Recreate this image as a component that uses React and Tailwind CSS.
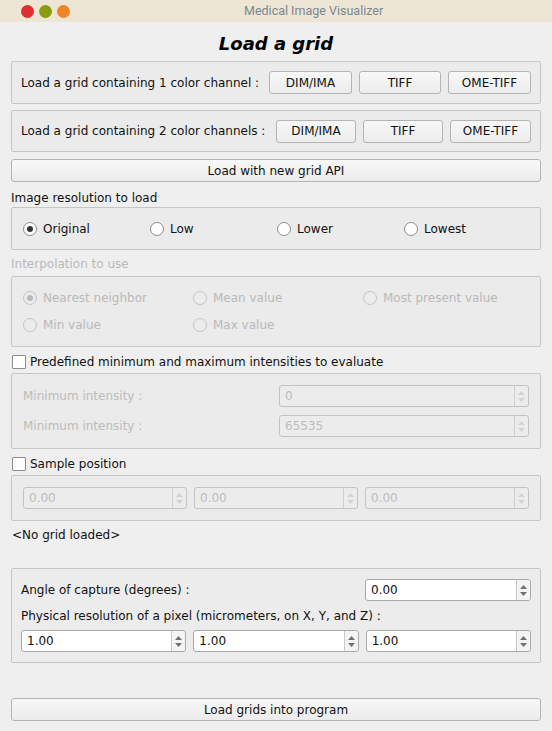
import React from 'react';

const FONT = { fontFamily: '"DejaVu Sans", Verdana, sans-serif' };

const Btn = ({ children, className = '' }) => (
  <div className={`h-[23px] flex items-center justify-center rounded-[3px] border border-[#b4b4b4] bg-gradient-to-b from-[#f8f8f8] to-[#ececec] text-[12px] text-[#111] ${className}`}>
    {children}
  </div>
);

const Radio = ({ label, checked, disabled }) => (
  <div className="flex items-center gap-[6px]">
    <div className={`w-[14px] h-[14px] rounded-full border flex items-center justify-center ${disabled ? 'border-[#c4c4c4] bg-[#ececec]' : 'border-[#8c8c8c] bg-white'}`}>
      {checked && <div className={`w-[6px] h-[6px] rounded-full ${disabled ? 'bg-[#b8b8b8]' : 'bg-[#333]'}`} />}
    </div>
    <span className={disabled ? 'text-[#b9b9b9]' : 'text-[#111]'}>{label}</span>
  </div>
);

const Check = ({ label }) => (
  <div className="h-[26px] pt-[4px] flex items-center gap-[4px] pl-[1px]">
    <div className="w-[14px] h-[14px] border border-[#8c8c8c] bg-white rounded-[1px]" />
    <span className="text-[#111]">{label}</span>
  </div>
);

const Spin = ({ value, disabled, className = '' }) => (
  <div className={`h-[22px] flex rounded-[3px] border ${disabled ? 'border-[#c2c2c2] bg-[#ececec]' : 'border-[#a8a8a8] bg-white'} ${className}`}>
    <div className={`flex-1 flex items-center pl-[5px] ${disabled ? 'text-[#bcbcbc]' : 'text-[#111]'}`}>{value}</div>
    <div className={`w-[14px] border-l flex flex-col items-center justify-center gap-[3px] ${disabled ? 'border-[#cfcfcf]' : 'border-[#c8c8c8] bg-[#f4f4f4] rounded-r-[3px]'}`}>
      <svg width="7" height="4" viewBox="0 0 7 4"><path d="M0 4 L3.5 0 L7 4 Z" fill={disabled ? '#d2d2d2' : '#707070'} /></svg>
      <svg width="7" height="4" viewBox="0 0 7 4"><path d="M0 0 L3.5 4 L7 0 Z" fill={disabled ? '#d2d2d2' : '#707070'} /></svg>
    </div>
  </div>
);

const Group = ({ className = '', children }) => (
  <div className={`border border-[#c6c6c6] rounded-[2px] bg-[#ebebeb] ${className}`}>{children}</div>
);

export default function App() {
  return (
    <div className="w-[552px] h-[731px] bg-[#efefef] text-[12px] overflow-hidden" style={FONT}>
      {/* title bar */}
      <div className="h-[22px] bg-[#ede6d5] flex items-center relative">
        <div className="flex gap-[5px] pl-[21px]">
          <div className="w-[13px] h-[13px] rounded-full bg-[#de3030]" />
          <div className="w-[13px] h-[13px] rounded-full bg-[#8a9c0c]" />
          <div className="w-[13px] h-[13px] rounded-full bg-[#ef8526]" />
        </div>
        <div className="absolute left-[244px] top-0 h-[22px] flex items-center text-[12.5px] text-[#7b8792]" style={{ fontFamily: 'Roboto, "Noto Sans", sans-serif' }}>
          Medical Image Visualizer
        </div>
      </div>

      <div className="h-[39px] pt-[4px] flex items-center justify-center text-[18px] font-bold italic text-black">
        Load a grid
      </div>

      <div className="px-[11px]">
        <Group className="h-[43px] flex items-center pl-[9px] pr-[9px]">
          <span className="flex-1 text-[#111]">Load a grid containing 1 color channel :</span>
          <div className="flex gap-[7px]">
            <Btn className="w-[83px]">DIM/IMA</Btn>
            <Btn className="w-[82px]">TIFF</Btn>
            <Btn className="w-[83px]">OME-TIFF</Btn>
          </div>
        </Group>

        <Group className="h-[42px] mt-[6px] flex items-center pl-[9px] pr-[9px]">
          <span className="flex-1 text-[#111]">Load a grid containing 2 color channels :</span>
          <div className="flex gap-[7px]">
            <Btn className="w-[80px]">DIM/IMA</Btn>
            <Btn className="w-[80px]">TIFF</Btn>
            <Btn className="w-[81px]">OME-TIFF</Btn>
          </div>
        </Group>

        <Btn className="mt-[7px]">Load with new grid API</Btn>

        <div className="h-[25px] flex items-end pb-[0px] text-[#111]">Image resolution to load</div>
        <Group className="h-[43px] grid grid-cols-4 items-center pl-[11px] pr-[9px]">
          <Radio label="Original" checked />
          <Radio label="Low" />
          <Radio label="Lower" />
          <Radio label="Lowest" />
        </Group>

        <div className="h-[26px] flex items-end pb-[3px] text-[#b9b9b9]">Interpolation to use</div>
        <Group className="h-[71px] grid grid-cols-3 content-center gap-y-[9px] pb-[1px] pl-[11px] pr-[7px]">
          <Radio label="Nearest neighbor" checked disabled />
          <Radio label="Mean value" disabled />
          <Radio label="Most present value" disabled />
          <Radio label="Min value" disabled />
          <Radio label="Max value" disabled />
        </Group>

        <Check label="Predefined minimum and maximum intensities to evaluate" />
        <Group className="h-[76px] flex flex-col justify-center gap-[8px] pl-[11px] pr-[11px]">
          <div className="flex items-center">
            <span className="flex-1 text-[#bcbcbc]">Minimum intensity :</span>
            <Spin value="0" disabled className="w-[250px]" />
          </div>
          <div className="flex items-center">
            <span className="flex-1 text-[#bcbcbc]">Minimum intensity :</span>
            <Spin value="65535" disabled className="w-[250px]" />
          </div>
        </Group>

        <Check label="Sample position" />
        <Group className="h-[46px] flex items-center gap-[7px] pl-[11px] pr-[11px]">
          <Spin value="0.00" disabled className="flex-1" />
          <Spin value="0.00" disabled className="flex-1" />
          <Spin value="0.00" disabled className="flex-1" />
        </Group>

        <div className="h-[28px] flex items-center pl-[1px] text-[#111]">&lt;No grid loaded&gt;</div>

        <Group className="mt-[19px] h-[95px] flex flex-col pt-[10px] pl-[9px] pr-[9px] bg-[#ececec]">
          <div className="flex items-center">
            <span className="flex-1 text-[#111]">Angle of capture (degrees) :</span>
            <Spin value="0.00" className="w-[166px]" />
          </div>
          <div className="h-[29px] flex items-center text-[#111]">Physical resolution of a pixel (micrometers, on X, Y, and Z) :</div>
          <div className="flex gap-[7px]">
            <Spin value="1.00" className="flex-1" />
            <Spin value="1.00" className="flex-1" />
            <Spin value="1.00" className="flex-1" />
          </div>
        </Group>

        <Btn className="mt-[35px]">Load grids into program</Btn>
      </div>
    </div>
  );
}
